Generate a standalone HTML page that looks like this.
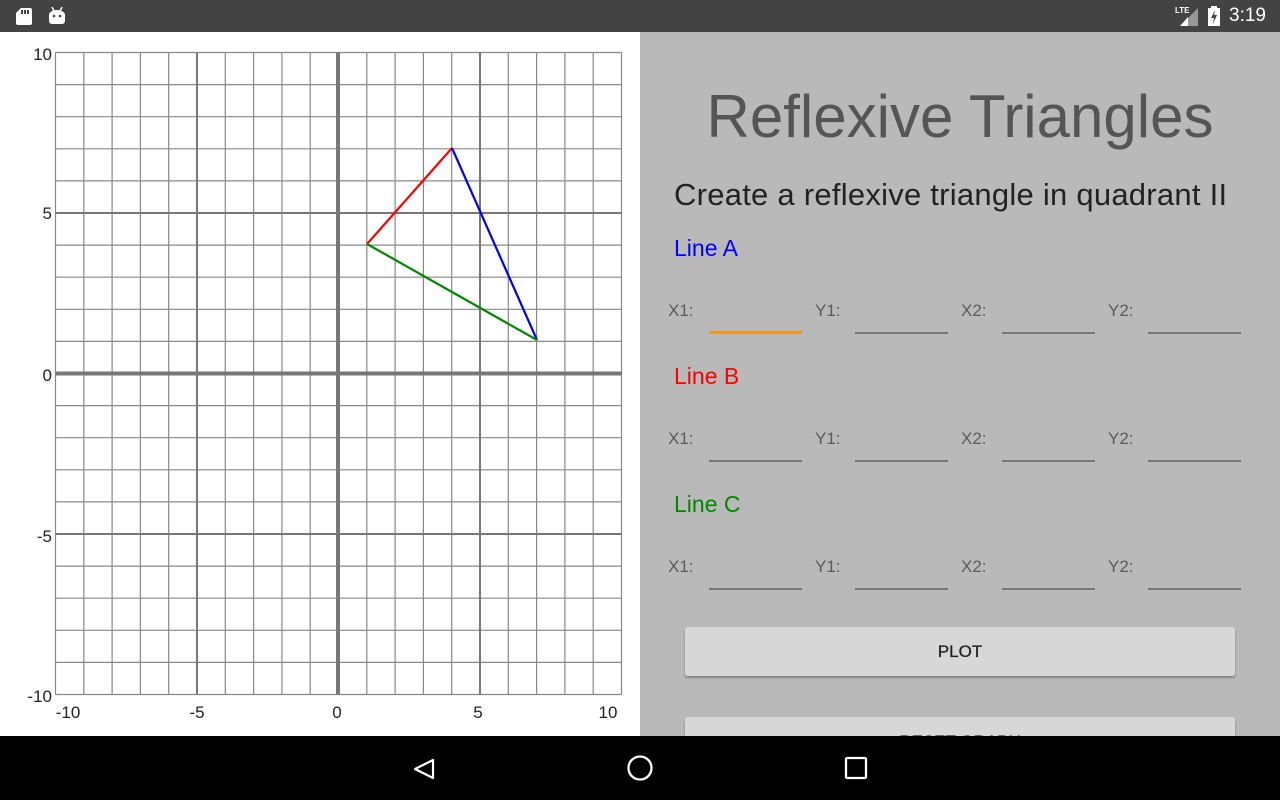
<!DOCTYPE html>
<html><head><meta charset="utf-8"><style>
*{margin:0;padding:0;box-sizing:border-box}
body{width:1280px;height:800px;overflow:hidden;position:relative;font-family:"Liberation Sans",sans-serif;background:#fff}
.abs{position:absolute}
#status{left:0;top:0;width:1280px;height:32px;background:#434343}
#nav{left:0;top:736px;width:1280px;height:64px;background:#000}
#right{left:640px;top:32px;width:640px;height:704px;background:#b9b9b9;overflow:hidden}
.lbl{font-size:17px;color:#222}
.yl{width:40px;text-align:right}
.xl{width:40px;text-align:center}
.fl{font-size:17px;color:#5a5a5a}
.ul{height:2px;background:#777;width:93px}
.btn{left:45px;width:550px;height:49px;background:#d6d7d6;border-radius:3px;box-shadow:0 2px 2px rgba(0,0,0,.3);text-align:center;font-size:17px;color:#222;line-height:49px;-webkit-text-stroke:0.3px #222}
</style></head><body>
<div id="status" class="abs">
<svg class="abs" style="left:16px;top:8px" width="16" height="17"><path d="M5 0H14a2 2 0 0 1 2 2V15a2 2 0 0 1-2 2H2a2 2 0 0 1-2-2V5Z" fill="#fff"/><rect x="5" y="2" width="2" height="4" fill="#434343"/><rect x="8" y="2" width="2" height="4" fill="#434343"/><rect x="11" y="2" width="2" height="4" fill="#434343"/></svg>
<svg class="abs" style="left:48px;top:7px" width="18" height="18"><path d="M4 0L6 4M14 0L12 4" stroke="#fff" stroke-width="1.5"/><path d="M1 8a8 5 0 0 1 16 0V14a3 3 0 0 1-3 3H4a3 3 0 0 1-3-3Z" fill="#fff"/><circle cx="6" cy="9" r="1.3" fill="#434343"/><circle cx="12" cy="9" r="1.3" fill="#434343"/></svg>
<div class="abs" style="left:1175px;top:6px;font-size:8px;color:#fff;font-weight:bold">LTE</div>
<svg class="abs" style="left:1178px;top:8px" width="20" height="18"><path d="M20 0V18H2Z" fill="#fff" opacity=".45"/><path d="M10 9V18H2L10 9Z" fill="#fff"/></svg>
<svg class="abs" style="left:1208px;top:6px" width="12" height="20"><rect x="3" y="0" width="6" height="2" fill="#fff"/><rect x="0" y="2" width="12" height="18" fill="#fff"/><path d="M7 4L3 12H6L5 18L9 9H6Z" fill="#434343"/></svg>
<div class="abs" style="left:1229px;top:5px;font-size:19px;color:#fff">3:19</div>
</div>

<svg class="abs" style="left:0;top:32px" width="640" height="704">
<g transform="translate(0,-32)">
<g stroke="#888" stroke-width="1.2" fill="none">
<path d="M55.5 52.5V694.5M83.8 52.5V694.5M112.1 52.5V694.5M140.4 52.5V694.5M168.7 52.5V694.5M225.3 52.5V694.5M253.6 52.5V694.5M281.9 52.5V694.5M310.2 52.5V694.5M366.8 52.5V694.5M395.1 52.5V694.5M423.4 52.5V694.5M451.7 52.5V694.5M508.3 52.5V694.5M536.6 52.5V694.5M564.9 52.5V694.5M593.2 52.5V694.5M621.5 52.5V694.5"/>
<path d="M55.5 52.5H621.5M55.5 84.6H621.5M55.5 116.7H621.5M55.5 148.8H621.5M55.5 180.9H621.5M55.5 245.1H621.5M55.5 277.2H621.5M55.5 309.3H621.5M55.5 341.4H621.5M55.5 405.6H621.5M55.5 437.7H621.5M55.5 469.8H621.5M55.5 501.9H621.5M55.5 566.1H621.5M55.5 598.2H621.5M55.5 630.3H621.5M55.5 662.4H621.5M55.5 694.5H621.5"/>
</g>
<g stroke="#777" stroke-width="2" fill="none">
<path d="M197 52.5V694.5M480 52.5V694.5M55.5 213H621.5M55.5 534H621.5"/>
</g>
<g stroke="#777" stroke-width="4" fill="none">
<path d="M338 52.5V694.5M55.5 373.5H621.5"/>
</g>
<g stroke-width="2.2" fill="none">
<path d="M367 244L452 148" stroke="#f00"/>
<path d="M452 148L537 340" stroke="#00f"/>
<path d="M367 244L537 340" stroke="#080"/>
</g>
</g>
</svg>
<div class="abs lbl yl" style="left:12px;top:45px">10</div>
<div class="abs lbl yl" style="left:12px;top:204px">5</div>
<div class="abs lbl yl" style="left:12px;top:366px">0</div>
<div class="abs lbl yl" style="left:12px;top:527px">-5</div>
<div class="abs lbl yl" style="left:12px;top:687px">-10</div>
<div class="abs lbl xl" style="left:48px;top:703px">-10</div>
<div class="abs lbl xl" style="left:177px;top:703px">-5</div>
<div class="abs lbl xl" style="left:317px;top:703px">0</div>
<div class="abs lbl xl" style="left:458px;top:703px">5</div>
<div class="abs lbl xl" style="left:588px;top:703px">10</div>

<div id="right" class="abs">
<div class="abs" style="left:0;width:640px;top:50px;text-align:center;font-size:60px;color:#555">Reflexive Triangles</div>
<div class="abs" style="left:34px;top:145px;font-size:31px;color:#222;letter-spacing:0.25px">Create a reflexive triangle in quadrant II</div>

<div class="abs" style="left:34px;top:203px;font-size:23px;color:#00f">Line A</div>
<div class="abs fl" style="left:28px;top:269px">X1:</div><div class="abs ul" style="left:69px;top:299px;background:#f7941d;height:3px"></div>
<div class="abs fl" style="left:175px;top:269px">Y1:</div><div class="abs ul" style="left:215px;top:300px"></div>
<div class="abs fl" style="left:321px;top:269px">X2:</div><div class="abs ul" style="left:362px;top:300px"></div>
<div class="abs fl" style="left:468px;top:269px">Y2:</div><div class="abs ul" style="left:508px;top:300px"></div>

<div class="abs" style="left:34px;top:331px;font-size:23px;color:#f00">Line B</div>
<div class="abs fl" style="left:28px;top:397px">X1:</div><div class="abs ul" style="left:69px;top:428px"></div>
<div class="abs fl" style="left:175px;top:397px">Y1:</div><div class="abs ul" style="left:215px;top:428px"></div>
<div class="abs fl" style="left:321px;top:397px">X2:</div><div class="abs ul" style="left:362px;top:428px"></div>
<div class="abs fl" style="left:468px;top:397px">Y2:</div><div class="abs ul" style="left:508px;top:428px"></div>

<div class="abs" style="left:34px;top:459px;font-size:23px;color:#080">Line C</div>
<div class="abs fl" style="left:28px;top:525px">X1:</div><div class="abs ul" style="left:69px;top:556px"></div>
<div class="abs fl" style="left:175px;top:525px">Y1:</div><div class="abs ul" style="left:215px;top:556px"></div>
<div class="abs fl" style="left:321px;top:525px">X2:</div><div class="abs ul" style="left:362px;top:556px"></div>
<div class="abs fl" style="left:468px;top:525px">Y2:</div><div class="abs ul" style="left:508px;top:556px"></div>

<div class="abs btn" style="top:595px">PLOT</div>
<div class="abs btn" style="top:685px">RESET GRAPH</div>
</div>

<div id="nav" class="abs">
<svg class="abs" style="left:412px;top:20px" width="26" height="26"><path d="M21 4V22L3 13Z" fill="none" stroke="#fff" stroke-width="2.2" stroke-linejoin="round"/></svg>
<svg class="abs" style="left:626px;top:18px" width="28" height="28"><circle cx="14" cy="14" r="11.5" fill="none" stroke="#fff" stroke-width="2.3"/></svg>
<svg class="abs" style="left:844px;top:20px" width="24" height="24"><rect x="2" y="2" width="20" height="20" rx="1" fill="none" stroke="#fff" stroke-width="2.3"/></svg>
</div>
</body></html>
